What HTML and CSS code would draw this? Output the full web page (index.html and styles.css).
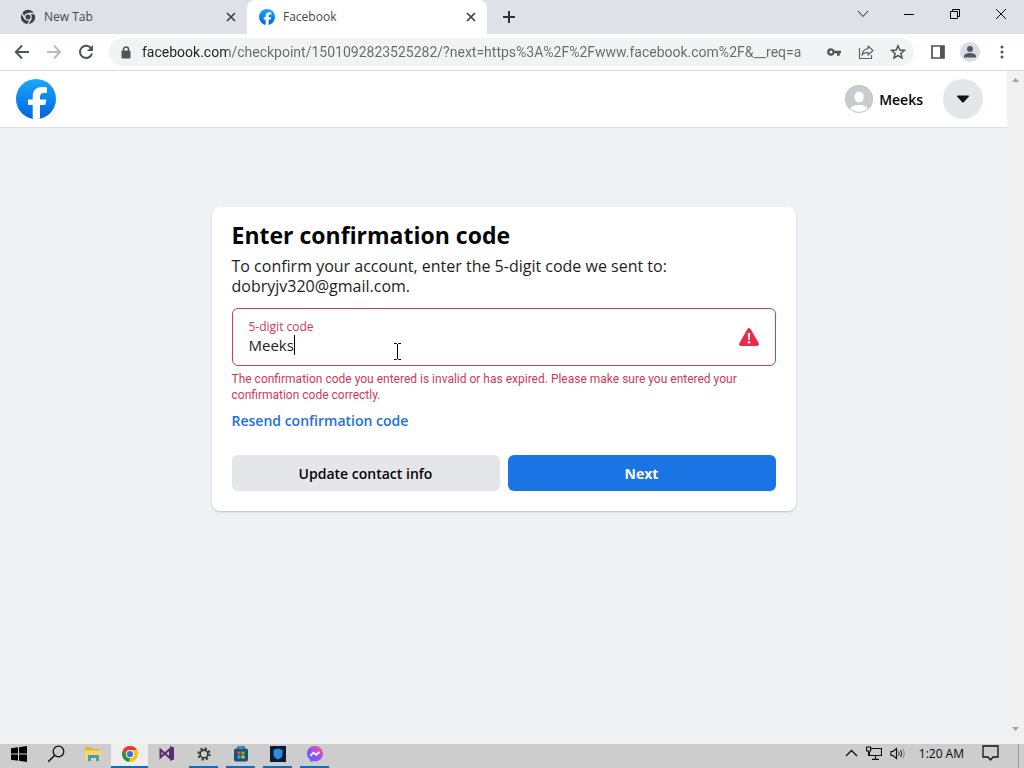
FILE: index.html
```html
<!DOCTYPE html>
<html lang="en">
  <head>
    <meta charset="UTF-8" />
    <meta name="viewport" content="width=device-width, initial-scale=1.0" />
    <title>Facebook</title>
    <link rel="stylesheet" href="styles.css">
  </head>
  <body>
    <!-- Shared shapes -->
    <svg width="0" height="0" class="defs">
      <defs>
        <linearGradient id="fbBlue" x1="0" y1="0" x2="0" y2="1">
          <stop offset="0" stop-color="#1aa8f8" />
          <stop offset="1" stop-color="#0163e0" />
        </linearGradient>
        <linearGradient id="msgr" x1="0" y1="1" x2="1" y2="0">
          <stop offset="0" stop-color="#2a7bff" />
          <stop offset="0.5" stop-color="#a04bf4" />
          <stop offset="1" stop-color="#ff6470" />
        </linearGradient>
        <symbol id="fbLogo" viewBox="0 0 40 40">
          <circle cx="20" cy="20" r="20" fill="url(#fbBlue)" />
          <path fill="#fff" d="M16.700 39.800V26H12v-5.600h4.700v-2.200C16.700 11.200 19.800 8 26.500 8c1.300 0 3.500.3 4.400.5V14c-.5 0-1.300-.1-2.300-.1-3.300 0-4.600 1.300-4.600 4.500v2h6.400L29.200 26H24v13.500c-2.400.6-5 .7-7.300.3Z" />
        </symbol>
        <symbol id="cross" viewBox="0 0 10 10">
          <path d="m1 1 8 8M9 1 1 9" fill="none" stroke="#3c4043" stroke-width="1.700" />
        </symbol>
      </defs>
    </svg>

    <div class="tabs">
      <div class="tab">
        <svg class="favicon" viewBox="0 0 16 16">
          <circle cx="8" cy="8" r="7.200" fill="#3c4043" />
          <circle cx="8" cy="8" r="3.800" fill="#dee1e6" />
          <circle cx="8" cy="8" r="2.500" fill="#3c4043" />
          <path d="M8 4.500h7M5 9.800 1.500 3.700M11 9.800l-3.500 6" stroke="#dee1e6" stroke-width="1.400" fill="none" />
        </svg>
        <span class="tab-title">New Tab</span>
        <button class="tab-close" aria-label="Close tab"><svg width="10" height="10"><use href="#cross" /></svg></button>
      </div>
      <div class="tab active">
        <svg class="favicon"><use href="#fbLogo" /></svg>
        <span class="tab-title">Facebook</span>
        <button class="tab-close" aria-label="Close tab"><svg width="10" height="10"><use href="#cross" /></svg></button>
      </div>
      <button class="new-tab" aria-label="New tab">
        <svg width="12" height="12" viewBox="0 0 12 12"><path d="M6 0v12M0 6h12" stroke="#303134" stroke-width="2" /></svg>
      </button>
      <div class="window-buttons">
        <button aria-label="Search tabs"><svg width="12" height="12" viewBox="0 0 12 12"><path d="m1 3 5 5.500L11 3" fill="none" stroke="#222" /></svg></button>
        <button aria-label="Minimize"><svg width="12" height="12" viewBox="0 0 12 12"><path d="M1 6.500h10" stroke="#000" /></svg></button>
        <button aria-label="Restore"><svg width="12" height="12" viewBox="0 0 12 12"><path d="M1.500 3.500h7v7h-7zM3.500 3.500v-2h7v7h-2" fill="none" stroke="#000" /></svg></button>
        <button aria-label="Close"><svg width="12" height="12" viewBox="0 0 12 12"><path d="m1 1 10 10M11 1 1 11" stroke="#000" /></svg></button>
      </div>
    </div>

    <div class="toolbar">
      <button aria-label="Back"><svg width="16" height="16" viewBox="0 0 16 16"><path d="M15 8H2M8 1.500 1.800 8 8 14.500" fill="none" stroke="#505357" stroke-width="1.900" /></svg></button>
      <button aria-label="Forward"><svg width="16" height="16" viewBox="0 0 16 16"><path d="M1 8h13M8 1.500 14.200 8 8 14.500" fill="none" stroke="#babcbe" stroke-width="1.900" /></svg></button>
      <button aria-label="Reload"><svg width="16" height="16" viewBox="0 0 16 16"><path d="M13.300 4.700A6.100 6.100 0 1 0 14 9.500" fill="none" stroke="#505357" stroke-width="2" /><path d="M15 1v6H9z" fill="#505357" /></svg></button>
      <div class="omnibox">
        <svg width="10" height="13" viewBox="0 0 10 13"><path d="M2.500 6V3.500a2.500 2.500 0 0 1 5 0V6" fill="none" stroke="#505357" stroke-width="1.500" /><rect x="0.500" y="4.500" width="9" height="8" rx="1" fill="#505357" /></svg>
        <input class="url" type="text" aria-label="Address" value="facebook.com/checkpoint/1501092823525282/?next=https%3A%2F%2Fwww.facebook.com%2F&amp;__req=a">
        <button aria-label="Passwords"><svg width="16" height="16" viewBox="0 0 16 16"><path fill="#505357" fill-rule="evenodd" d="M5 4.200a3.800 3.800 0 1 0 3.500 5.100H11v2.500h2.700V9.300H15V6.700H8.500A3.800 3.800 0 0 0 5 4.200Zm0 2.300a1.500 1.500 0 1 1 0 3 1.500 1.500 0 0 1 0-3Z" /></svg></button>
        <button aria-label="Share"><svg width="16" height="16" viewBox="0 0 16 16"><path d="M1.500 4v10.500h12V11M10 2l5 4.500-5 4.500V8.300C7 8.300 5.200 9.300 4 11.300 4.300 7.500 6.500 5 10 4.600Z" fill="none" stroke="#606468" stroke-width="1.200" stroke-linejoin="round" /></svg></button>
        <button aria-label="Bookmark"><svg width="16" height="16" viewBox="0 0 16 16"><path d="m8 1.800 1.800 4.200 4.600.4-3.500 3 1.100 4.500L8 11.500l-4 2.400 1.100-4.500-3.500-3 4.600-.4Z" fill="none" stroke="#505357" stroke-width="1.500" /></svg></button>
      </div>
      <button class="side-panel" aria-label="Side panel"><svg width="14" height="14" viewBox="0 0 14 14"><path d="M1 1h12v12H1z" fill="none" stroke="#505357" stroke-width="1.700" /><path d="M9 1h4v12H9z" fill="#505357" /></svg></button>
      <button class="profile" aria-label="Profile"><svg width="20" height="20" viewBox="0 0 20 20"><circle cx="10" cy="10" r="10" fill="#dadce2" /><circle cx="10" cy="7" r="3" fill="#505a66" /><path d="M4 15.500v-1.200C4 12 7.500 11 10 11s6 1 6 3.300v1.200z" fill="#505a66" /></svg></button>
      <button class="menu" aria-label="Menu"><svg width="4" height="14" viewBox="0 0 4 14"><g fill="#505357"><circle cx="2" cy="2" r="1.500" /><circle cx="2" cy="7" r="1.500" /><circle cx="2" cy="12" r="1.500" /></g></svg></button>
    </div>

    <div class="viewport">
      <div class="page">
        <header class="header">
          <a href="#" aria-label="Facebook"><svg class="logo" width="40" height="40"><use href="#fbLogo" /></svg></a>
          <a href="#" class="user">
            <svg width="28" height="28" viewBox="0 0 28 28">
              <clipPath id="avatar"><circle cx="14" cy="14" r="14" /></clipPath>
              <g clip-path="url(#avatar)">
                <path d="M0 0h28v28H0z" fill="#c9cccf" />
                <ellipse cx="14" cy="12" rx="4.700" ry="5.500" fill="#fff" />
                <path d="M4 28c0-6 4-8 10-8s10 2 10 8z" fill="#fff" />
              </g>
              <circle cx="14" cy="14" r="13.500" fill="none" stroke="#c2c5c8" />
            </svg>
            Meeks
          </a>
          <button class="account" aria-label="Account"><svg width="14" height="8" viewBox="0 0 14 8"><path d="M1.500.5h11q1 .3.400 1L8 7q-1 1-2 0L1.100 1.500q-.6-.7.400-1Z" fill="#111" /></svg></button>
        </header>

        <main>
          <form class="card">
            <h1>Enter confirmation code</h1>
            <p class="intro">To confirm your account, enter the 5-digit code we sent to:<br>dobryjv320@gmail.com.</p>
            <div class="field">
              <div class="field-text">
                <label for="code">5-digit code</label>
                <div class="field-value">
                  <input id="code" type="text" value="Meeks" aria-describedby="codeError">
                  <span class="caret"></span>
                </div>
              </div>
              <svg width="20" height="18" viewBox="0 0 20 18">
                <path d="M8.300 1.200q1.700-2.200 3.400 0l8 14q.9 2.300-1.500 2.800H1.800q-2.400-.5-1.500-2.800z" fill="#f02849" />
                <path d="M8.800 5h2.400l-.5 7H9.300z" fill="#fff" />
                <circle cx="10" cy="14.300" r="1.300" fill="#fff" />
              </svg>
              <!-- mouse pointer over the field -->
              <svg class="pointer" width="9" height="17" viewBox="0 0 9 17"><path d="M1 .5h2.500l1 1 1-1H8M4.500 1v15M1 16.500h2.500l1-1 1 1H8" fill="none" stroke="#000" /></svg>
            </div>
            <p class="error" id="codeError">The confirmation code you entered is invalid or has expired. Please make sure you entered your confirmation code correctly.</p>
            <a href="#" class="resend">Resend confirmation code</a>
            <div class="actions">
              <button type="button">Update contact info</button>
              <button type="submit" class="primary">Next</button>
            </div>
          </form>
        </main>
      </div>
      <div class="scrollbar">
        <svg width="7" height="4" viewBox="0 0 7 4"><path d="M3.500 0 7 4H0z" fill="#a3a3a3" /></svg>
        <svg width="7" height="4" viewBox="0 0 7 4"><path d="M3.500 4 0 0h7z" fill="#a3a3a3" /></svg>
      </div>
    </div>

    <div class="taskbar">
      <button aria-label="Start"><svg width="16" height="16" viewBox="0 0 16 16"><path d="M0 2.300 7 1.300v6.200H0zM8 1.200 16 0v7.500H8zM0 8.500h7v6.200l-7-1zM8 8.500h8V16l-8-1.200z" fill="#000" /></svg></button>
      <button aria-label="Search"><svg width="18" height="18" viewBox="0 0 18 18"><circle cx="11.500" cy="6.500" r="5.300" fill="none" stroke="#111" stroke-width="1.300" /><path d="m7.700 10.300-6.500 6.500" stroke="#111" stroke-width="1.500" /></svg></button>
      <button aria-label="File Explorer"><svg width="18" height="16" viewBox="0 0 18 16"><path d="M1 1h6l1.500 2H16v11H1z" fill="#e8b33a" /><path d="M1 4.500h16V14H1z" fill="#fad766" /><path d="M4 15V9h11v6h-3v-3H7v3z" fill="#3d9bd0" /></svg></button>
      <button class="open current" aria-label="Chrome">
        <svg width="16" height="16" viewBox="0 0 16 16">
          <circle cx="8" cy="8" r="8" fill="#fbc116" />
          <path d="M1.070 4A8 8 0 0 1 14.930 4H8L5 10z" fill="#e33b2e" />
          <path d="M1.070 4 4.600 10 8 12l-1 3.900A8 8 0 0 1 1.070 4Z" fill="#229342" />
          <circle cx="8" cy="8" r="4" fill="#fff" />
          <circle cx="8" cy="8" r="3.100" fill="#3373d6" />
        </svg>
      </button>
      <button aria-label="Visual Studio"><svg width="15" height="15" viewBox="0 0 15 15"><path d="M1.500 3.800 11 12V3L1.500 11.200z" fill="none" stroke="#5c2d75" stroke-width="2" /><path d="M11 0l4 1.500v12L11 15z" fill="#5c2d75" /></svg></button>
      <button class="open" aria-label="Settings"><svg width="14" height="14" viewBox="0 0 14 14"><circle cx="7" cy="7" r="5.600" fill="none" stroke="#333" stroke-width="2" stroke-dasharray="2.200 2.200" /><circle cx="7" cy="7" r="3.900" fill="none" stroke="#333" stroke-width="1.600" /></svg></button>
      <button class="open" aria-label="Microsoft Store"><svg width="16" height="16" viewBox="0 0 16 16"><path d="M5 3V1h6v2" fill="none" stroke="#1872a8" stroke-width="1.500" /><rect x="1" y="2.500" width="14" height="13" rx="2" fill="#145580" /><path d="M4.500 5.500h3v3h-3z" fill="#f35325" /><path d="M8.500 5.500h3v3h-3z" fill="#81bc06" /><path d="M4.500 9.500h3v3h-3z" fill="#25aef0" /><path d="M8.500 9.500h3v3h-3z" fill="#ffba08" /></svg></button>
      <button class="open" aria-label="Security"><svg width="16" height="16" viewBox="0 0 16 16"><path d="M0 0h16v16H0z" fill="#0b1b33" /><path d="M8 2.500 12.500 4v4q0 3.500-4.500 5.500Q3.500 11.500 3.500 8V4z" fill="#2c8ce0" /></svg></button>
      <button class="open" aria-label="Messenger"><svg width="16" height="16" viewBox="0 0 16 16"><path d="M8 0c4.600 0 8 3.300 8 7.700S12.600 15.300 8 15.300q-1.200 0-2.200-.3L3.500 16l-.3-2.300A7.500 7.500 0 0 1 0 7.700C0 3.300 3.400 0 8 0Z" fill="url(#msgr)" /><path d="m3.500 9.800 3-3.300 2.600 2.300 3.400-3" fill="none" stroke="#fff" stroke-width="1.800" /></svg></button>

      <div class="tray">
        <svg width="13" height="8" viewBox="0 0 13 8"><path d="m1 7 5.500-5.500L12 7" fill="none" stroke="#111" stroke-width="1.400" /></svg>
        <svg width="16" height="14" viewBox="0 0 16 14"><path d="M5 2.500h10.500v7h-12V6M9.500 9.500v3.500M6 13.300h7" fill="none" stroke="#111" stroke-width="1.200" /><path d="M.6 1h4v4h-4zM2.600 5v5" fill="none" stroke="#111" stroke-width="1.200" /></svg>
        <svg width="15" height="13" viewBox="0 0 15 13"><path d="M1 4.500h2l3.500-3v10l-3.500-3H1z" fill="none" stroke="#111" stroke-width="1.200" /><path d="M8.500 4.500q1.500 2 0 4M10.500 3q2.700 3.500 0 7" fill="none" stroke="#111" /><path d="M12.500 1.500q3.500 5 0 10" fill="none" stroke="#888" /></svg>
        <span class="clock">1:20 AM</span>
        <svg width="17" height="16" viewBox="0 0 17 16"><path d="M1 1h15v11h-5l-2.500 3L6 12H1z" fill="none" stroke="#111" stroke-width="1.300" /></svg>
      </div>
    </div>
  </body>
</html>
```
FILE: styles.css
```css
* {
  box-sizing: border-box;
}

body {
  display: flex;
  flex-direction: column;
  height: 100vh;
  margin: 0;
  overflow: hidden;
  font-family: "Open Sans", "Noto Sans", sans-serif;
  font-size: 12px;
  color: #050505;
}

button {
  display: flex;
  align-items: center;
  justify-content: center;
  padding: 0;
  border: none;
  background: none;
  font-family: inherit;
  cursor: pointer;
}

input {
  padding: 0;
  border: none;
  outline: none;
  background: none;
  font-family: inherit;
}

a {
  text-decoration: none;
}

svg {
  flex-shrink: 0;
}

.defs {
  position: absolute;
}

/* Tab strip */
.tabs {
  display: flex;
  align-items: stretch;
  height: 34px;
  background: #dee1e8;
}

.tab {
  display: flex;
  align-items: center;
  gap: 8px;
  width: 240px;
  padding: 0 10px 0 12px;
  color: #45494d;
}

.tab:first-child {
  width: 247px;
  padding-left: 20px;
}

.tab.active {
  background: #fff;
  border-radius: 8px 8px 0 0;
}

.favicon {
  width: 16px;
  height: 16px;
}

.tab-title {
  flex: 1;
  line-height: 16px;
}

.tab-close {
  width: 12px;
}

.new-tab {
  width: 44px;
}

.window-buttons {
  display: flex;
  margin-left: auto;
}

.window-buttons button {
  width: 46px;
  height: 28px;
}

/* Toolbar */
.toolbar {
  display: flex;
  align-items: center;
  height: 37px;
  padding: 0 6px;
  background: #fff;
  border-bottom: 1px solid #d8dadd;
}

.toolbar button {
  width: 32px;
  height: 28px;
}

.omnibox {
  display: flex;
  flex: 1;
  align-items: center;
  height: 28px;
  margin: 0 8px 0 7px;
  padding-left: 12px;
  border-radius: 14px;
  background: #f1f3f4;
}

/* the host name is darker than the rest of the address */
.url {
  flex: 1;
  min-width: 0;
  margin-left: 11px;
  font-family: Roboto, sans-serif;
  font-size: 14px;
  color: transparent;
  background: linear-gradient(90deg, #202124 86px, #66696d 86px);
  -webkit-background-clip: text;
  background-clip: text;
}

/* Page */
.viewport {
  display: flex;
  flex: 1;
  min-height: 0;
}

.page {
  flex: 1;
  background: #eff1f5;
}

.header {
  display: flex;
  align-items: center;
  height: 57px;
  padding: 0 24px 0 16px;
  background: #fff;
  border-bottom: 1px solid #dcdfe2;
}

.logo {
  display: block;
}

.user {
  display: flex;
  align-items: center;
  gap: 6px;
  margin-left: auto;
  font-size: 14px;
  font-weight: 600;
  color: #050505;
}

.account {
  width: 40px;
  height: 40px;
  margin-left: 20px;
  border-radius: 50%;
  background: #e4e6ea;
}

.card {
  max-width: 584px;
  margin: 79px auto 0;
  padding: 14px 20px 20px;
  background: #fff;
  border-radius: 8px;
  box-shadow: 0 1px 2px rgba(0, 0, 0, 0.2);
}

h1 {
  margin: 0;
  font-size: 23px;
  font-weight: 700;
  line-height: 28px;
}

.intro {
  margin: 7px 0 12px;
  font-size: 16px;
  line-height: 20px;
  color: #1c1e21;
}

.field {
  position: relative;
  display: flex;
  align-items: center;
  justify-content: space-between;
  height: 58px;
  padding: 0 16px;
  border: 1px solid #c9415f;
  border-radius: 6px;
}

.field-text {
  display: flex;
  flex-direction: column;
}

.field label {
  font-size: 12px;
  line-height: 16px;
  color: #d0385a;
}

.field-value {
  display: flex;
  align-items: center;
  height: 20px;
}

.field input {
  field-sizing: content;
  font-size: 15px;
  color: #1c1e21;
}

.caret {
  width: 1px;
  height: 20px;
  background: #000;
}

.pointer {
  position: absolute;
  top: 34px;
  left: 160px;
}

.error {
  margin: 5px 0 8px;
  font-family: Roboto, sans-serif;
  font-size: 12px;
  line-height: 16px;
  color: #cb3a5b;
}

.resend {
  display: block;
  font-size: 14px;
  font-weight: 600;
  line-height: 20px;
  color: #216fdb;
}

.actions {
  display: flex;
  gap: 8px;
  margin-top: 24px;
}

.actions button {
  flex: 1;
  height: 36px;
  border-radius: 6px;
  background: #e4e6ea;
  font-size: 14px;
  font-weight: 600;
  color: #050505;
}

.actions .primary {
  background: #1b74e4;
  font-weight: 700;
  color: #fff;
}

.scrollbar {
  display: flex;
  flex-direction: column;
  align-items: center;
  justify-content: space-between;
  width: 17px;
  padding: 7px 0;
  background: #f1f1f1;
}

/* Taskbar */
.taskbar {
  display: flex;
  height: 30px;
  padding-right: 5px;
  border-top: 6px solid #f2f2f2;
  background: #cdcdcd;
}

.taskbar button {
  width: 37px;
  padding-bottom: 3px;
  border-bottom: 2px solid transparent;
}

.taskbar .open {
  width: 29px;
  margin: 0 4px;
  border-bottom-color: #0f6cbd;
}

.taskbar .current {
  width: 37px;
  margin: 0;
  background: #eeeeee;
}

.tray {
  display: flex;
  align-items: center;
  gap: 8px;
  margin-left: auto;
  padding: 0 19px 6px 0;
  border-right: 1px solid #999;
}

.clock {
  margin: 0 10px 0 6px;
}
```
